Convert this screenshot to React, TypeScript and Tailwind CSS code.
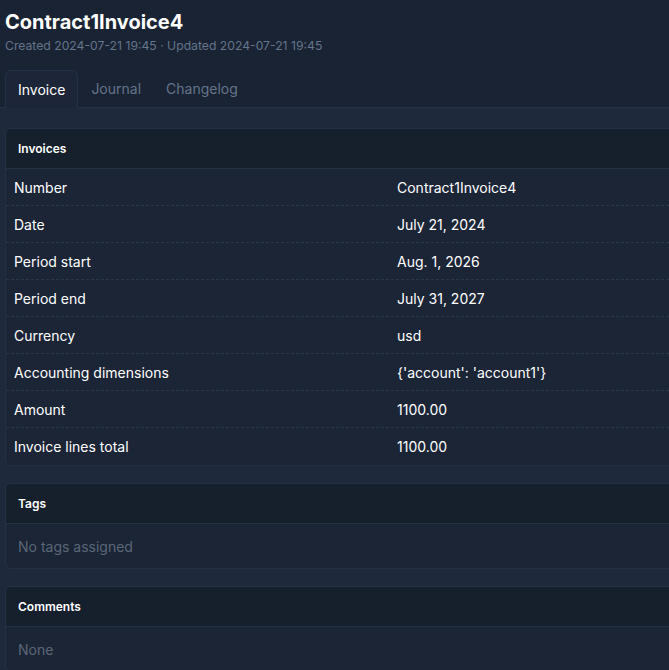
const rows: [string, string][] = [
  ["Number", "Contract1Invoice4"],
  ["Date", "July 21, 2024"],
  ["Period start", "Aug. 1, 2026"],
  ["Period end", "July 31, 2027"],
  ["Currency", "usd"],
  ["Accounting dimensions", "{'account': 'account1'}"],
  ["Amount", "1100.00"],
  ["Invoice lines total", "1100.00"],
];

const Card = ({ title, children }: { title: string; children: React.ReactNode }) => (
  <div className="overflow-hidden rounded-md border border-[#243044] bg-[#1b2536]">
    <div className="flex h-10 items-center border-b border-[#243044] bg-[#161f2c] px-3 text-[12px] font-semibold text-white">
      {title}
    </div>
    {children}
  </div>
);

export default function App() {
  return (
    <div
      className="h-[670px] w-[669px] overflow-hidden bg-[#1a2333] text-white"
      style={{ fontFamily: "Inter, 'Noto Sans', sans-serif" }}
    >
      <div className="w-[800px]">
        <div className="px-[5px] pt-[8px]">
          <h1 className="text-[20px] font-bold leading-7">Contract1Invoice4</h1>
          <p className="mt-px text-[12.2px] leading-[18px] text-[#64748b]">
            Created 2024-07-21 19:45 · Updated 2024-07-21 19:45
          </p>
        </div>
        <div className="mt-[15px] flex px-[5px] text-[14px]">
          <div className="-mb-px flex h-[38px] items-center rounded-t-md border border-b-0 border-[#253146] bg-[#1c2638] px-[12px] text-white">
            Invoice
          </div>
          <div className="flex h-[37px] items-center px-[13px] text-[#64748b]">Journal</div>
          <div className="flex h-[37px] items-center px-[12px] text-[#64748b]">Changelog</div>
        </div>
        <div className="flex flex-col gap-[17px] border-t border-[#253146] bg-[#1e293b] pl-[5px] pt-5">
          <Card title="Invoices">
            {rows.map(([label, value], i) => (
              <div
                key={label}
                className={`grid h-[37px] grid-cols-[383px_1fr] items-center px-2 text-[14px] ${
                  i < rows.length - 1 ? "border-b border-dashed border-[#2a3649]" : ""
                }`}
              >
                <span className="text-white">{label}</span>
                <span className="text-white">{value}</span>
              </div>
            ))}
          </Card>
          <Card title="Tags">
            <div className="flex h-[44px] items-center px-3 text-[14px] text-[#5b6678]">
              No tags assigned
            </div>
          </Card>
          <Card title="Comments">
            <div className="flex h-[44px] items-center px-3 text-[14px] text-[#5b6678]">
              None
            </div>
          </Card>
        </div>
      </div>
    </div>
  );
}
